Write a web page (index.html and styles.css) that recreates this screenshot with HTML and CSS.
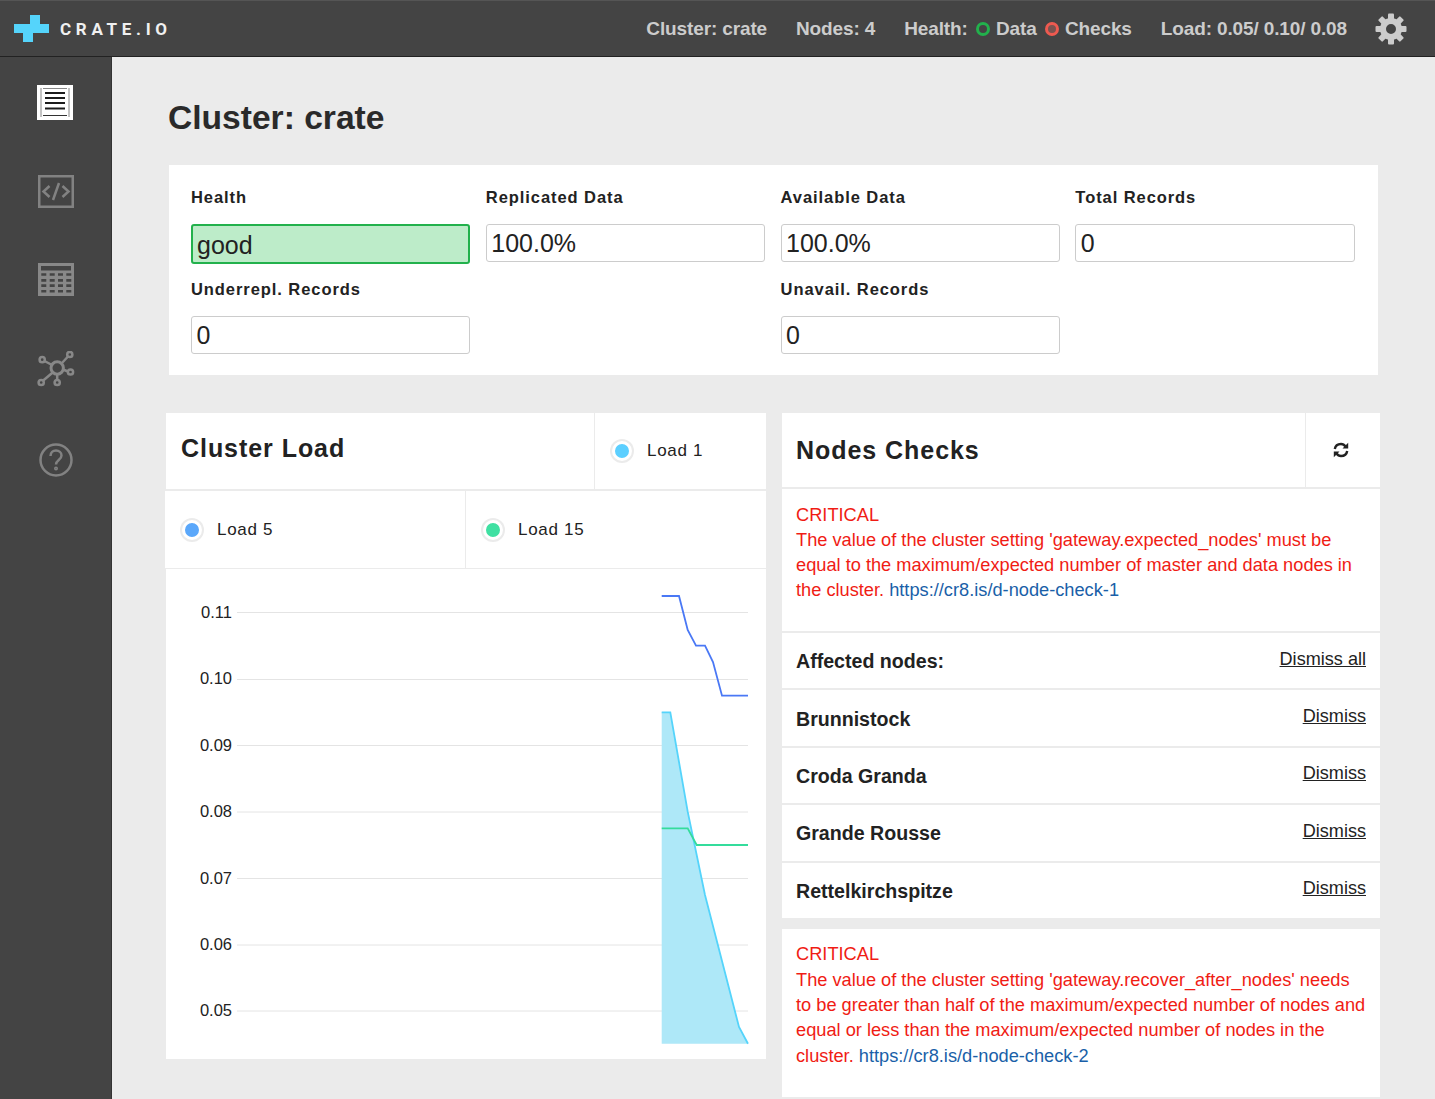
FILE: index.html
```html
<!DOCTYPE html>
<html lang="en">
<head>
  <meta charset="UTF-8">
  <meta name="viewport" content="width=device-width, initial-scale=1.0">
  <title>Crate Admin</title>
  <link rel="stylesheet" href="styles.css">
</head>
<body>
  <header class="topbar">
    <div class="logo">
      <svg class="logo-mark" width="35" height="27" viewBox="0 0 35 27"><path d="M16 0h10v9h9v9H19v9H9v-9H0V9h16z" fill="#55d4fb"/></svg>
      <span class="logo-text">CRATE.IO</span>
    </div>
    <nav class="status">
      <span>Cluster: crate</span>
      <span>Nodes: 4</span>
      <span class="health">Health:
        <i class="dot dot-good"></i> Data
        <i class="dot dot-bad"></i> Checks</span>
      <span>Load: 0.05/ 0.10/ 0.08</span>
      <svg class="gear" width="32" height="32" viewBox="-16 -16 32 32">
        <g fill="#ccc">
          <rect x="-3" y="-15.500" width="6" height="7" rx="1"/>
          <rect x="-3" y="-15.500" width="6" height="7" rx="1" transform="rotate(45)"/>
          <rect x="-3" y="-15.500" width="6" height="7" rx="1" transform="rotate(90)"/>
          <rect x="-3" y="-15.500" width="6" height="7" rx="1" transform="rotate(135)"/>
          <rect x="-3" y="-15.500" width="6" height="7" rx="1" transform="rotate(180)"/>
          <rect x="-3" y="-15.500" width="6" height="7" rx="1" transform="rotate(225)"/>
          <rect x="-3" y="-15.500" width="6" height="7" rx="1" transform="rotate(270)"/>
          <rect x="-3" y="-15.500" width="6" height="7" rx="1" transform="rotate(315)"/>
        </g>
        <circle r="8" fill="none" stroke="#ccc" stroke-width="6"/>
      </svg>
    </nav>
  </header>

  <div class="layout">
    <aside class="sidebar">
      <a class="side-item">
        <svg class="icon-first" width="36" height="35" viewBox="0 0 36 35">
          <rect width="36" height="35" fill="#fff"/>
          <path d="M4 3v29M32 3v29M6 3.500h24" fill="none" stroke="#888" stroke-width="1"/>
          <path d="M8 8h20M8 13h20M8 18h20M8 23.500h20" stroke="#1c1c1c" stroke-width="2"/>
          <path d="M6 30.500h24" stroke="#333" stroke-width="1"/>
        </svg>
      </a>
      <a class="side-item">
        <svg width="36" height="33" viewBox="0 0 36 33" fill="none" stroke="#828282">
          <rect x="1.250" y="1.250" width="33.500" height="30.500" stroke-width="2.500"/>
          <path d="M11.500 11l-6 5.500 6 5.500M24.500 11l6 5.500-6 5.500M21 8l-6 17" stroke-width="2.500"/>
        </svg>
      </a>
      <a class="side-item">
        <svg class="icon-up" width="36" height="33" viewBox="0 0 36 33">
          <path fill="#888" fill-rule="evenodd" d="M0 0h36v33H0zM3 3v4.500h30V3zM3.300 10.300v2.400h5v-2.400zM11.700 10.300v2.400h5v-2.400zM20 10.300v2.400h5v-2.400zM28.300 10.300v2.400h5v-2.400zM3.300 16v2.700h5V16zM11.700 16v2.700h5V16zM20 16v2.700h5V16zM28.300 16v2.700h5V16zM3.300 21.300V24h5v-2.700zM11.700 21.300V24h5v-2.700zM20 21.300V24h5v-2.700zM28.300 21.300V24h5v-2.700zM3.300 27v2.400h5V27zM11.700 27v2.400h5V27zM20 27v2.400h5V27zM28.300 27v2.400h5V27z"/>
        </svg>
      </a>
      <a class="side-item">
        <svg width="38" height="38" viewBox="0 0 38 38" fill="none" stroke="#888" stroke-width="2.500">
          <circle cx="20.200" cy="17" r="6.200" stroke-width="3"/>
          <circle cx="5.200" cy="8.700" r="2.600"/>
          <circle cx="32.800" cy="3.500" r="2.600"/>
          <circle cx="33.500" cy="21" r="2.600"/>
          <circle cx="4.200" cy="31.500" r="2.600"/>
          <circle cx="20.200" cy="31.500" r="2.600"/>
          <path d="M7.500 10l7.500 4M31 5.500l-6.500 7M31 20.500l-5-2M6.200 29.500l9.500-8M20.200 29v-5.500"/>
        </svg>
      </a>
      <a class="side-item">
        <svg width="36" height="36" viewBox="0 0 36 36" fill="none" stroke="#828282" stroke-width="2.500">
          <circle cx="18" cy="18" r="15.500"/>
          <path d="M12.500 14c0-3.500 2.500-5.500 5.500-5.500s5.500 2 5.500 5c0 4.500-5.500 4.500-5.500 9"/>
          <circle cx="18" cy="26.500" r="1.200" stroke-width="1.600"/>
        </svg>
      </a>
    </aside>

    <main class="content">
      <h1 class="page-title">Cluster: crate</h1>

      <section class="stats">
        <div class="stat">
          <label>Health</label>
          <div class="value value-good">good</div>
        </div>
        <div class="stat">
          <label>Replicated Data</label>
          <div class="value">100.0%</div>
        </div>
        <div class="stat">
          <label>Available Data</label>
          <div class="value">100.0%</div>
        </div>
        <div class="stat">
          <label>Total Records</label>
          <div class="value">0</div>
        </div>
        <div class="stat">
          <label>Underrepl. Records</label>
          <div class="value">0</div>
        </div>
        <div class="stat stat-skip">
          <label>Unavail. Records</label>
          <div class="value">0</div>
        </div>
      </section>

      <div class="panels">
        <section class="panel-load">
          <div class="load-head">
            <h2 class="panel-title">Cluster Load</h2>
            <div class="legend legend-one"><i class="swatch swatch-1"></i>Load 1</div>
          </div>
          <div class="load-legends">
            <div class="legend legend-five"><i class="swatch swatch-5"></i>Load 5</div>
            <div class="legend legend-fifteen"><i class="swatch swatch-15"></i>Load 15</div>
          </div>
          <svg class="chart" width="600" height="490" viewBox="166 569 600 490">
            <g stroke="#e4e4e4" stroke-width="1">
              <path d="M237 612.500H748M237 679.500H748M237 745.500H748M237 812H748M237 878.500H748M237 945H748M237 1011H748"/>
            </g>
            <g class="chart-labels" text-anchor="end">
              <text x="232" y="618">0.11</text>
              <text x="232" y="684">0.10</text>
              <text x="232" y="751">0.09</text>
              <text x="232" y="817">0.08</text>
              <text x="232" y="884">0.07</text>
              <text x="232" y="950">0.06</text>
              <text x="232" y="1016">0.05</text>
            </g>
            <path d="M661.700 712.300H670.300L687.700 811.700L705 895L739 1027L748 1043.700H661.700Z" fill="#aee8f8"/>
            <path d="M661.700 712.300H670.300L687.700 811.700L705 895L739 1027L748 1043.700" fill="none" stroke="#55d4fb" stroke-width="1.800"/>
            <path d="M661.700 596H679L687.700 630L696 645.700H705L713 662L722 695.700H748" fill="none" stroke="#4a78f5" stroke-width="1.800"/>
            <path d="M661.700 828.300H687.700L696.700 845H748" fill="none" stroke="#34dc9c" stroke-width="1.800"/>
          </svg>
        </section>

        <section class="panel-checks">
          <div class="checks-head">
            <h2 class="panel-title">Nodes Checks</h2>
            <div class="refresh">
              <svg width="16" height="16" viewBox="0 0 16 16" fill="none" stroke="#222" stroke-width="2.400">
                <path d="M1.800 7c.5-3 3-5 6.200-5 2 0 3.500 1 4.500 2.500M14.200 9c-.5 3-3 5-6.200 5-2 0-3.500-1-4.500-2.500"/>
                <path d="M15.200 .8v5.700h-5.700zM.8 15.200V9.500h5.700z" fill="#222" stroke="none"/>
              </svg>
            </div>
          </div>
          <div class="check-msg">
            CRITICAL<br>
            The value of the cluster setting 'gateway.expected_nodes' must be equal to the maximum/expected number of master and data nodes in the cluster.
            <a href="#">https://cr8.is/d-node-check-1</a>
          </div>
          <div class="node-row node-row-head"><strong>Affected nodes:</strong><a href="#">Dismiss all</a></div>
          <div class="node-row"><strong>Brunnistock</strong><a href="#">Dismiss</a></div>
          <div class="node-row"><strong>Croda Granda</strong><a href="#">Dismiss</a></div>
          <div class="node-row"><strong>Grande Rousse</strong><a href="#">Dismiss</a></div>
          <div class="node-row"><strong>Rettelkirchspitze</strong><a href="#">Dismiss</a></div>
          <div class="check-msg check-msg-second">
            CRITICAL<br>
            The value of the cluster setting 'gateway.recover_after_nodes' needs to be greater than half of the maximum/expected number of nodes and equal or less than the maximum/expected number of nodes in the cluster.
            <a href="#">https://cr8.is/d-node-check-2</a>
          </div>
          <div class="node-row node-row-cut"></div>
        </section>
      </div>
    </main>
  </div>
</body>
</html>
```

FILE: styles.css
```css
html, body {
  margin: 0;
  height: 100%;
  overflow: hidden;
}
body {
  display: flex;
  flex-direction: column;
  font-family: 'Liberation Sans', Arial, sans-serif;
  background-color: #ebebeb;
  color: #222;
}

/* top bar */
.topbar {
  flex: none;
  height: 57px;
  box-sizing: border-box;
  display: flex;
  align-items: center;
  justify-content: space-between;
  background-color: #444;
  border-top: 1px solid #555;
  border-bottom: 1px solid #222;
}
.logo {
  display: flex;
  align-items: center;
  padding-left: 14px;
}
.logo-mark {
  margin-right: 11px;
}
.logo-text {
  font-family: Roboto, 'Liberation Sans', sans-serif;
  font-weight: 700;
  font-size: 17px;
  letter-spacing: 4.7px;
  color: #f0f0f0;
}
.status {
  display: flex;
  align-items: center;
  gap: 29px;
  padding-right: 28px;
  font-size: 19px;
  font-weight: 700;
  letter-spacing: -0.13px;
  color: #ccc;
}
.dot {
  display: inline-block;
  width: 8px;
  height: 8px;
  border-radius: 50%;
  margin: 0 1px 0 3px;
  vertical-align: -1px;
}
.dot-good {
  border: 3px solid #22b14c;
  background: #444;
}
.dot-bad {
  border: 3px solid #ee5a50;
  background: #7a5350;
}
.gear {
  display: block;
  margin-left: -1px;
}

.layout {
  flex: 1;
  display: flex;
  min-height: 0;
}

/* sidebar */
.sidebar {
  flex: none;
  width: 111px;
  background-color: #444;
  border-right: 1px solid #333;
}
.side-item {
  height: 89.500px;
  display: flex;
  align-items: center;
  justify-content: center;
}
.icon-first {
  margin: 2px 1px 0 0;
}
.icon-up {
  margin-top: -2px;
}

/* main */
.content {
  flex: 1;
  padding: 43px 55px 0 57px;
  min-width: 0;
}
.page-title {
  margin: 0 0 29px -1px;
  font-size: 33.600px;
  line-height: 36px;
  font-weight: 700;
  color: #2a2a2a;
}

.stats {
  width: 1209px;
  height: 210px;
  box-sizing: border-box;
  padding: 22px 22px 0 22px;
  background: #fff;
  display: grid;
  grid-template-columns: repeat(4, 279.400px);
  grid-auto-rows: 92px;
  column-gap: 15.400px;
}
.stat label {
  display: block;
  height: 37px;
  font-size: 16.500px;
  line-height: 20px;
  font-weight: 700;
  letter-spacing: 0.93px;
  color: #222;
}
.stat-skip {
  grid-column: 3;
}
.value {
  box-sizing: border-box;
  height: 38px;
  padding: 0 4.500px;
  border: 1px solid #ccc;
  border-radius: 3px;
  font-size: 25px;
  line-height: 36px;
  color: #222;
  background: #fff;
}
.value-good {
  height: 40px;
  border: 2px solid #22b14c;
  background: #bdecc9;
  line-height: 38px;
  padding: 0 4px;
}

/* panels */
.panels {
  display: flex;
  align-items: flex-start;
  gap: 16px;
  margin: 38px 0 0 -3px;
}
.panel-load {
  flex: none;
  width: 600px;
  background: #fff;
}
.panel-checks {
  flex: none;
  width: 598px;
  background: #fff;
}
.panel-title {
  margin: 0;
  font-size: 25px;
  font-weight: 700;
  letter-spacing: 0.95px;
  color: #222;
}
.load-head {
  display: flex;
  height: 76px;
  border-bottom: 2px solid #ebebeb;
}
.load-head .panel-title {
  flex: 1;
  padding: 20px 0 0 15px;
  line-height: 30px;
}
.legend {
  display: flex;
  align-items: center;
  font-size: 17px;
  letter-spacing: 0.7px;
  color: #222;
}
.legend-one {
  width: 172px;
  box-sizing: border-box;
  padding: 0 0 0 17px;
  border-left: 1px solid #ebebeb;
}
.load-legends {
  display: flex;
  height: 77px;
  margin-left: -1px;
  background: #fff;
  border-bottom: 1px solid #ebebeb;
}
.legend-five {
  width: 301px;
  box-sizing: border-box;
  padding-left: 17px;
  border-right: 1px solid #ebebeb;
}
.legend-fifteen {
  flex: 1;
  padding-left: 17px;
}
.swatch {
  flex: none;
  width: 14px;
  height: 14px;
  border-radius: 50%;
  border: 3px solid #fff;
  box-shadow: 0 0 0 2px #ebebeb;
  margin-right: 15px;
}
.swatch-1 {
  background: #5ccfff;
}
.swatch-5 {
  background: #5aa7fa;
}
.swatch-15 {
  background: #3fe0a2;
}
.chart {
  display: block;
}
.chart-labels {
  font-size: 16.500px;
  fill: #222;
}

.checks-head {
  display: flex;
  height: 74px;
  border-bottom: 2px solid #ebebeb;
}
.checks-head .panel-title {
  flex: 1;
  padding: 22px 0 0 14px;
  line-height: 30px;
}
.refresh {
  width: 75px;
  box-sizing: border-box;
  padding-right: 4px;
  display: flex;
  align-items: center;
  justify-content: center;
  border-left: 1px solid #ebebeb;
}
.check-msg {
  box-sizing: border-box;
  height: 144px;
  padding: 12.500px 14px 0 14px;
  font-size: 18.230px;
  line-height: 25.300px;
  color: #f01c14;
  border-bottom: 2px solid #ebebeb;
}
.check-msg a {
  color: #1a5fa8;
  text-decoration: none;
}
.node-row {
  box-sizing: border-box;
  height: 57.400px;
  display: flex;
  justify-content: space-between;
  padding: 0 14px;
  align-items: center;
  border-bottom: 2px solid #ebebeb;
}
.node-row strong {
  font-size: 19.600px;
  font-weight: 700;
  color: #222;
  padding-top: 2px;
}
.node-row a {
  font-size: 18.100px;
  color: #222;
  margin-bottom: 3px;
}
.check-msg-second {
  border-top: 9.500px solid #ebebeb;
  height: 179px;
}
.node-row-cut {
  border-bottom: 0;
}
```
